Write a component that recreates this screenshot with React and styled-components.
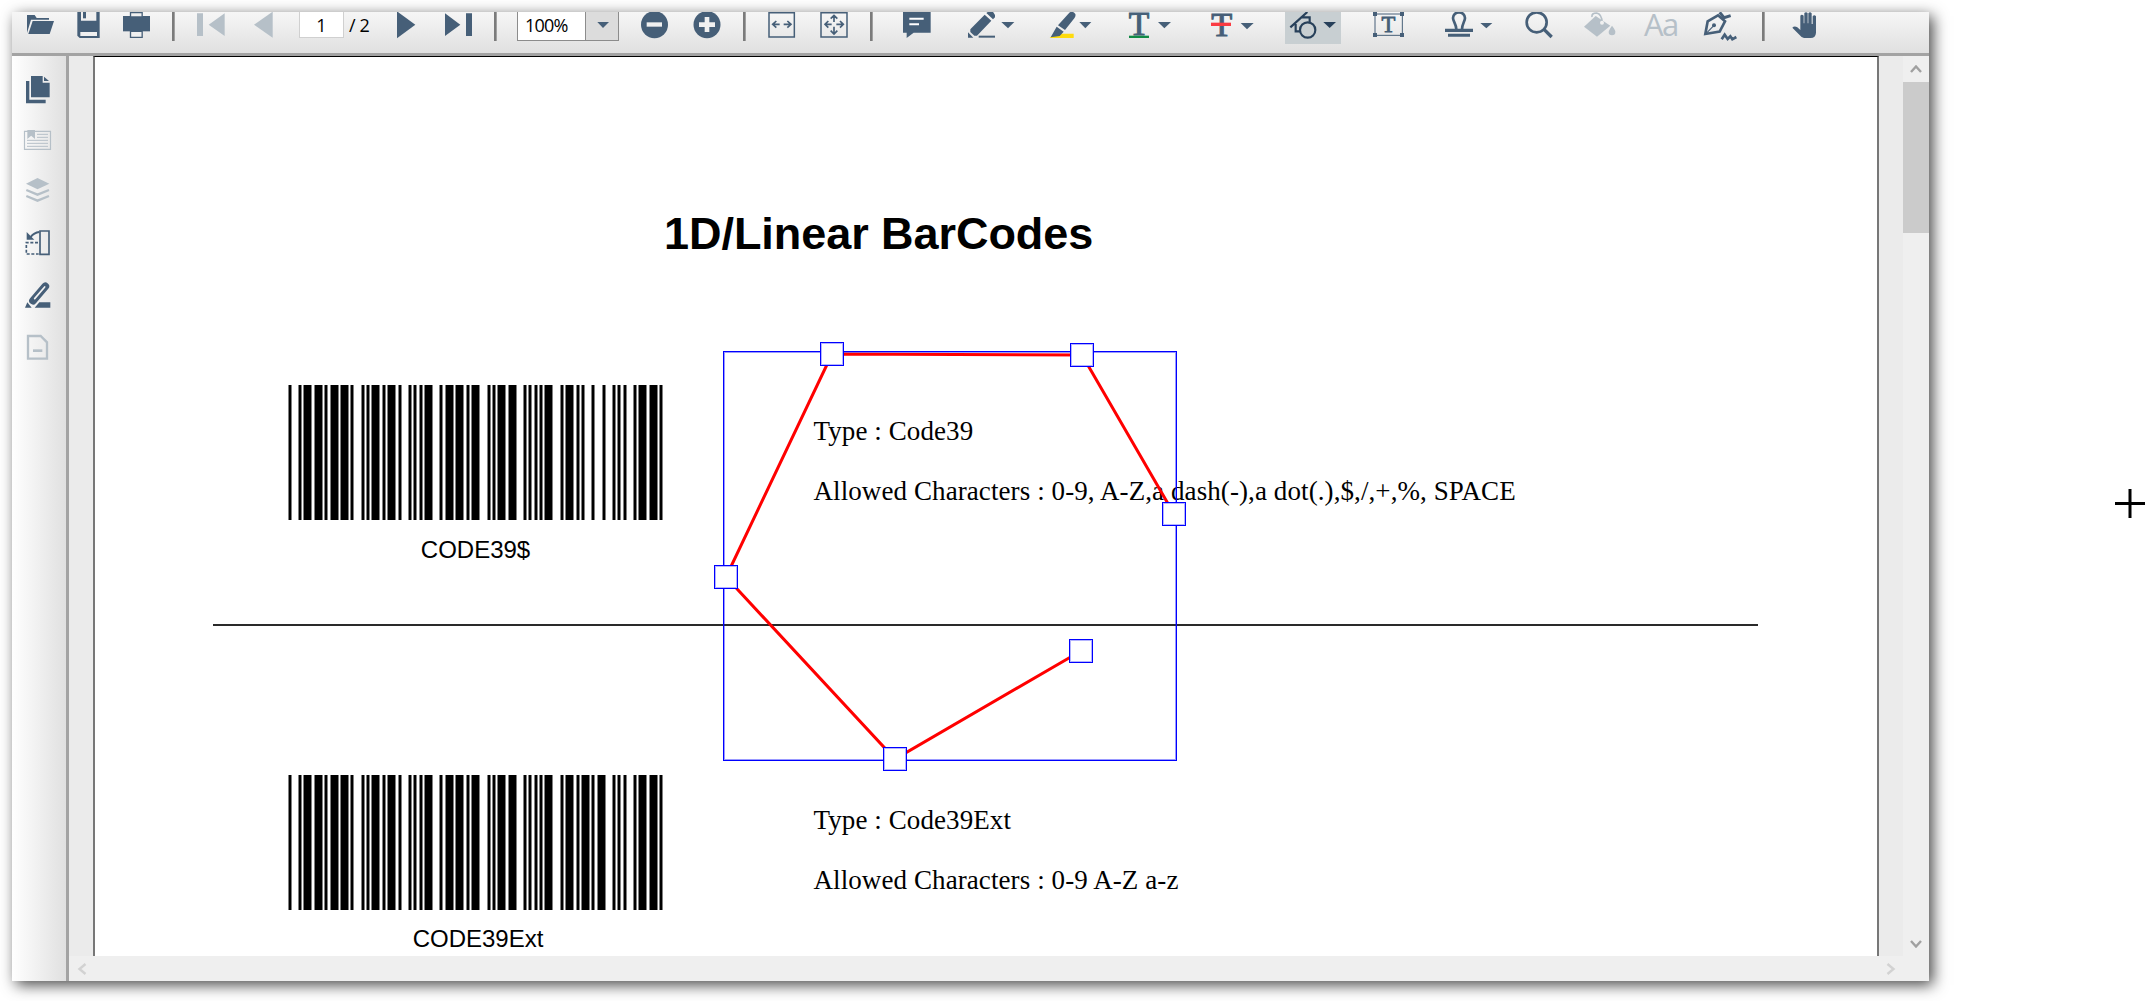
import React from 'react';
import styled, { createGlobalStyle, css } from 'styled-components';

const INK = '#465f78';
const FADED = '#b6c0c8';

const GlobalStyle = createGlobalStyle`
  * { box-sizing: border-box; }
  body { margin: 0; background: #fff; overflow: hidden; }
`;

const Desktop = styled.main`
  position: relative;
  width: 2154px;
  height: 1001px;
  padding: 12px;
  overflow: hidden;
  background: #fff;
`;

const Window = styled.div`
  display: flex;
  flex-direction: column;
  width: 1917px;
  height: 969px;
  background: #ebebeb;
  box-shadow: 4px 4px 14px rgba(0, 0, 0, 0.72);
`;

const Toolbar = styled.header`
  display: flex;
  align-items: flex-start;
  height: 44px;
  padding-left: 14px;
  background: linear-gradient(#f6f6f6, #e0e0e0);
  border-bottom: 3px solid #a3a3a3;
`;

const Glyph = styled.svg`
  display: block;
  flex: none;
  color: ${(p) => (p.$faded ? FADED : INK)};
  fill: currentColor;
  overflow: ${(p) => (p.$open ? 'visible' : 'hidden')};
`;

const Tool = styled.button`
  display: flex;
  flex: none;
  margin: 0 0 0 ${(p) => p.$gap}px;
  padding: 0;
  border: 0;
  background: none;
  ${(p) =>
    p.$pressed &&
    css`
      height: 32px;
      overflow: hidden;
      background: #c8cfd2;
      ${Glyph} { color: #27405a; }
    `}
`;

const Divider = styled.span`
  flex: none;
  width: 3px;
  height: 29px;
  margin-left: ${(p) => p.$gap}px;
  background: #7b7b7b;
  border-right: 1px solid #a0a0a0;
`;

const uiText = css`
  font-family: 'Open Sans', 'Noto Sans', sans-serif;
  font-size: 18px;
  line-height: 27px;
  color: #000;
`;

const PageBox = styled.span`
  ${uiText}
  flex: none;
  width: 45px;
  height: 26px;
  margin-left: 25px;
  text-align: center;
  background: #fff;
  border: 1px solid #d0d0d0;
  border-top: 0;
`;

const PageTotal = styled.span`
  ${uiText}
  flex: none;
  width: 22px;
  margin-left: 5px;
  white-space: nowrap;
  letter-spacing: -0.4px;
`;

const ZoomBox = styled.div`
  ${uiText}
  display: flex;
  flex: none;
  width: 102px;
  height: 29px;
  margin-left: 20px;
  background: #fff;
  border: 1px solid #8c8c8c;
  border-top: 0;
`;

const ZoomValue = styled.span`
  flex: 1;
  padding-left: 7px;
  letter-spacing: -0.8px;
`;

const ZoomArrow = styled.span`
  display: flex;
  justify-content: center;
  width: 33px;
  padding: 10px 0 0 2px;
  background: #dcdcdc;
  border-left: 1px solid #8c8c8c;
`;

const FontTool = styled.button`
  flex: none;
  width: 36px;
  margin: 0 0 0 27px;
  padding: 0;
  border: 0;
  background: none;
  color: ${FADED};
  font: 31px/25px 'Open Sans', 'Noto Sans', sans-serif;
  letter-spacing: -1.5px;
  text-align: left;
`;

const Body = styled.div`
  display: flex;
  flex: 1;
  min-height: 0;
`;

const Sidebar = styled.nav`
  display: flex;
  flex-direction: column;
  align-items: flex-start;
  width: 57px;
  padding: 19px 0 0 11px;
  background: linear-gradient(90deg, #fff, #e0e0e0);
  border-right: 3px solid #a3a3a3;
`;

const SideTool = styled.button`
  display: block;
  margin: 0 0 ${(p) => p.$after}px;
  padding: 0;
  border: 0;
  background: none;
`;

const Viewer = styled.section`
  display: flex;
  flex-direction: column;
  flex: 1;
  min-width: 0;
`;

const Viewport = styled.div`
  display: flex;
  height: 900px;
`;

const Canvas = styled.div`
  display: flex;
  flex: 1;
  justify-content: center;
  background: #ebebeb;
  overflow: hidden;
`;

const Page = styled.article`
  position: relative;
  width: 1786px;
  height: 900px;
  overflow: hidden;
  background: #fff;
  border: solid #777;
  border-width: 1px 2px 0;
  border-top-color: #000;
`;

const Heading = styled.h1`
  margin: 152px 0 126px 569px;
  font: bold 45px/50px 'Liberation Sans', Arial, sans-serif;
  letter-spacing: -0.05px;
  white-space: nowrap;
`;

const Entry = styled.section`
  display: flex;
  gap: 150px;
  height: 179px;
  padding-left: 193px;
`;

const Figure = styled.figure`
  width: 375px;
  margin: 0;
`;

const Caption = styled.figcaption`
  margin-top: ${(p) => (p.$wide ? 15 : 16)}px;
  padding-left: ${(p) => (p.$wide ? 5 : 0)}px;
  text-align: center;
  font: 24px/28px 'Liberation Sans', Arial, sans-serif;
`;

const Info = styled.div`
  display: flex;
  flex-direction: column;
  gap: 30px;
  padding: ${(p) => p.$top}px 0 0 0.5px;
  white-space: nowrap;
  font: 27px/30px 'Liberation Serif', 'Times New Roman', serif;
  letter-spacing: 0.09px;
`;

const Rule = styled.hr`
  width: 1545px;
  height: 2px;
  margin: 60px 0 149px 118px;
  border: 0;
  background: #2a2a2a;
`;

const Annotation = styled.svg`
  position: absolute;
  left: 0;
  top: 0;
`;

const VScroll = styled.div`
  display: flex;
  flex-direction: column;
  align-items: center;
  width: 26px;
  padding: 9px 0 8px;
  background: #efefef;
`;

const Thumb = styled.div`
  width: 26px;
  height: 151px;
  margin: 9px 0 auto;
  background: #cbcbcb;
`;

const HScroll = styled.div`
  display: flex;
  align-items: center;
  justify-content: space-between;
  height: 25px;
  padding: 1px 33px 0 8px;
  background: #efefef;
`;

const Crosshair = styled.svg`
  position: absolute;
  left: 2115px;
  top: 489px;
`;

/* Toolbar art is drawn on a grid of three units to the pixel. */
function Icon({ x, y = 36, w, h = 41, faded, open, children }) {
  return (
    <Glyph width={w} height={h} viewBox={`${x} ${y} ${w * 3} ${h * 3}`} $faded={faded} $open={open}>
      {children}
    </Glyph>
  );
}

function Stroke({ d, w = 5, ...rest }) {
  return <path d={d} fill="none" stroke="currentColor" strokeWidth={w} {...rest} />;
}

function Letter({ x, y, size, w = 2.5 }) {
  return (
    <text
      x={x}
      y={y}
      fontSize={size}
      textAnchor="middle"
      fontFamily="'Liberation Serif', serif"
      stroke="currentColor"
      strokeWidth={w}
    >
      T
    </text>
  );
}

const PAPER = '#f0f0f0';

const CODE39 = {
  '*': 'nwnnwnwnn',
  C: 'wnwnnwnnn',
  O: 'wnnnwnnwn',
  D: 'nnnnwwnnw',
  E: 'wnnnwwnnn',
  3: 'wnwwnnnnn',
  9: 'nnwwnnwnn',
  $: 'nwnwnwnnn',
};

function Barcode({ value }) {
  const bars = [];
  let at = 0;
  for (const ch of `*${value}*`) {
    [...CODE39[ch]].forEach((size, i) => {
      if (i % 2 === 0) {
        bars.push({ x: Math.floor(0.15 + at * 2.6175), w: size === 'w' ? 9 : 4 });
      }
      at += size === 'w' ? 3 : 1;
    });
    at += 1;
  }
  return (
    <svg width="375" height="135" display="block" shapeRendering="crispEdges">
      {bars.map((b) => (
        <g key={b.x}>
          <rect x={b.x} width={b.w} height="135" fill="#808080" />
          <rect x={b.x + 1} width={b.w - 2} height="135" />
        </g>
      ))}
    </svg>
  );
}

function Code({ value, caption, wide, children }) {
  return (
    <Entry>
      <Figure>
        <Barcode value={value} />
        <Caption $wide={wide}>{caption}</Caption>
      </Figure>
      <Info $top={wide ? 30 : 31}>{children}</Info>
    </Entry>
  );
}

const VERTICES = [
  [737, 297],
  [987, 298],
  [1079, 457],
  [631, 520],
  [800, 702],
  [986, 594],
];

function Polyline() {
  return (
    <Annotation width="1782" height="899">
      <polyline
        points="1079,457 987,298 737,297 631,520 800,702 986,594"
        fill="none"
        stroke="#f00"
        strokeWidth="3"
      />
      <rect x="629.5" y="295.5" width="451" height="407" fill="none" stroke="#00f" strokeOpacity="0.4" />
      <rect x="628.5" y="294.5" width="453" height="409" fill="none" stroke="#00f" />
      {VERTICES.map(([x, y]) => (
        <g key={`${x}-${y}`}>
          <rect x={x - 11.5} y={y - 11.5} width="23" height="23" fill="#fff" stroke="#00f" />
          <rect x={x - 10.5} y={y - 10.5} width="21" height="21" fill="none" stroke="#b4b4ff" />
        </g>
      ))}
    </Annotation>
  );
}

function Chevron({ d, w, h, color }) {
  return (
    <svg width={w} height={h}>
      <path d={d} fill="none" stroke={color} strokeWidth="2.4" />
    </svg>
  );
}

function MainToolbar() {
  return (
    <Toolbar>
      <Tool $gap={0}>
        <Icon x={78} w={30}>
          <path d="M81 45H104L110 54H147V59H93L81 99Z" />
          <path d="M98 63H162L149 102H85Z" />
        </Icon>
      </Tool>
      <Tool $gap={20}>
        <Icon x={228} w={25}>
          <path d="M232 30H299V114H239L232 107Z" />
          <path d="M243 30H289V62H243ZM241 96H291V108H241Z" fill={PAPER} />
          <path d="M249 30H258V55H249Z" />
        </Icon>
      </Tool>
      <Tool $gap={21}>
        <Icon x={366} w={29}>
          <path d="M369 48H450V94H369Z" />
          <path d="M391.500 38H426.500V51H391.500ZM391.500 94H426.500V112H391.500Z" fill={PAPER} stroke="currentColor" strokeWidth="4" />
        </Icon>
      </Tool>
      <Divider $gap={21} />
      <Tool $gap={21}>
        <Icon x={588} w={30} faded>
          <path d="M591 40H609V108H591ZM674 40V108L626 74Z" />
        </Icon>
      </Tool>
      <Tool $gap={27}>
        <Icon x={759} w={21} faded>
          <path d="M818 35V113L762 74Z" />
        </Icon>
      </Tool>
      <PageBox>1</PageBox>
      <PageTotal>/ 2</PageTotal>
      <Tool $gap={25}>
        <Icon x={1188} w={21}>
          <path d="M1191 34V115L1246 74Z" />
        </Icon>
      </Tool>
      <Tool $gap={27}>
        <Icon x={1332} w={30}>
          <path d="M1335 40V108L1381 74ZM1398 40H1416V108H1398Z" />
        </Icon>
      </Tool>
      <Divider $gap={20} />
      <ZoomBox>
        <ZoomValue>100%</ZoomValue>
        <ZoomArrow>
          <Icon x={324} y={66} w={12} h={7}>
            <path d="M325 66H360L342 84Z" />
          </Icon>
        </ZoomArrow>
      </ZoomBox>
      <Tool $gap={21}>
        <Icon x={450} w={29}>
          <circle cx="493.500" cy="74" r="40.500" />
          <path d="M470 67H516V80H470Z" fill={PAPER} />
        </Icon>
      </Tool>
      <Tool $gap={24}>
        <Icon x={609} w={29}>
          <circle cx="651" cy="74" r="40.500" />
          <path d="M627 67H644V51H658V67H675V81H658V96H644V81H627Z" fill={PAPER} />
        </Icon>
      </Tool>
      <Divider $gap={21} />
      <Tool $gap={22}>
        <Icon x={834} w={28}>
          <Stroke d="M837 38H913V111H837Z" w={4.5} />
          <Stroke d="M848 73H869M859 63L848 73L859 83M881 73H903M892 63L903 73L892 83" />
        </Icon>
      </Tool>
      <Tool $gap={24}>
        <Icon x={990} w={29}>
          <Stroke d="M993 38H1071V111H993Z" w={4.5} />
          <Stroke d="M1005 73H1025M1015 63L1005 73L1015 83M1039 73H1060M1050 63L1060 73L1050 83M1032 46V66M1022 56L1032 46L1042 56M1032 80V102M1022 92L1032 102L1042 92" />
        </Icon>
      </Tool>
      <Divider $gap={21} />
      <Tool $gap={29}>
        <Icon x={1236} w={30}>
          <path d="M1239 32H1322V98H1271L1250 114V98H1239Z" />
          <path d="M1258 53H1301V59H1258ZM1258 70H1287V76H1258Z" fill="#fff" />
        </Icon>
      </Tool>
      <Tool $gap={35}>
        <Icon x={21} w={50}>
          <path d="M31 88L74 44L94 62L51 107L43 107L31 96ZM79 39L86 34H98L105 45V52L99 58ZM24 97L40 113H24Z" />
          <Stroke d="M56 110H105" w={6} />
          <path d="M124 66H163L144 85Z" />
        </Icon>
      </Tool>
      <Tool $gap={32}>
        <Icon x={267} w={44}>
          <path d="M269 114L284 101H341V114Z" fill="#ffdb0d" />
          <path d="M328 38Q338 31 346 42Q348 48 343 55L315 90L294 76ZM290 80L311 95L299 108L272 112Z" />
          <path d="M358 66H394L376 85Z" />
        </Icon>
      </Tool>
      <Tool $gap={35}>
        <Icon x={504} w={45} open>
          <Letter x={537} y={104} size={101} w={3} />
          <path d="M507 107H567V114H507Z" fill="#108a45" />
          <path d="M594 66H633L613 85Z" />
        </Icon>
      </Tool>
      <Tool $gap={37}>
        <Icon x={750} w={46} open>
          <Letter x={785} y={109} size={103} w={3} />
          <path d="M753 68H813V78H753Z" fill="#fb3b42" />
          <path d="M842 69H881L861 88Z" />
        </Icon>
      </Tool>
      <Tool $gap={29} $pressed>
        <Icon x={975} w={56}>
          <Stroke d="M991 82L1042 36M1022 52H1049V66M1007 72V94H1020" w={6.5} />
          <circle cx="1043" cy="90" r="23" fill="none" stroke="currentColor" strokeWidth="6.500" />
          <path d="M1090 66H1128L1109 84Z" />
        </Icon>
      </Tool>
      <Tool $gap={31}>
        <Icon x={1236} w={33} open>
          <Stroke d="M1245 42H1327V106H1245Z" w={3} />
          <path d="M1239 36H1251V48H1239ZM1320 36H1332V48H1320ZM1239 99H1251V111H1239ZM1320 99H1332V111H1320Z" />
          <Letter x={1285} y={95} size={68} w={2.5} />
        </Icon>
      </Tool>
      <Tool $gap={39}>
        <Icon x={102} w={50}>
          <Stroke d="M139 88C139 72 129 64 129 54A18 17 0 0 1 165 54C165 64 156 72 156 88" w={8} />
          <path d="M105 86H189V96H105ZM114 101H180V110H114ZM211 69H247L229 85Z" />
        </Icon>
      </Tool>
      <Tool $gap={30}>
        <Icon x={342} w={30}>
          <circle cx="380" cy="67" r="30" fill="none" stroke="currentColor" strokeWidth="8" />
          <Stroke d="M402 88L425 111" w={10} />
        </Icon>
      </Tool>
      <Tool $gap={29}>
        <Icon x={519} w={34} faded>
          <path d="M522 80L557 48L601 77L561 110Z" />
          <Stroke d="M546 51Q544 39 560 39Q576 42 576 68" w={5} />
          <circle cx="576" cy="68" r="6" fill={PAPER} />
          <path d="M606 77Q617 91 616 96A10 10 0 0 1 596 96Q596 91 606 77Z" />
        </Icon>
      </Tool>
      <FontTool>Aa</FontTool>
      <Tool $gap={23}>
        <Icon x={879} w={36}>
          <Stroke d="M886 102L893 64L924 46L945 64L929 95Z" w={8} />
          <Stroke d="M888 101L912 76" w={3.5} />
          <circle cx="912" cy="76" r="6" />
          <Stroke d="M929 37L942 53L962 47" w={9} />
          <Stroke d="M935 118L944 104L953 117L961 109L967 118L979 111" w={8} />
        </Icon>
      </Tool>
      <Divider $gap={23} />
      <Tool $gap={26}>
        <Icon x={1143} w={27}>
          <path d="M1147 83Q1153 77 1162 82L1171 90V47Q1175 41 1181 47V70H1183V39Q1188 34 1193 39V70H1195V40Q1200 34 1205 40V72H1208V49Q1213 43 1218 49V98Q1217 114 1202 114H1182Q1174 112 1168 104Z" />
        </Icon>
      </Tool>
    </Toolbar>
  );
}

function SideRail() {
  return (
    <Sidebar>
      <SideTool $after={20}>
        <Icon x={69} y={75} w={29} h={30}>
          <path d="M78 93H88V149H137V160H78ZM93 78H128V98H149V142H93ZM132 80L147 93H132Z" />
        </Icon>
      </SideTool>
      <SideTool $after={20}>
        <Icon x={69} y={225} w={29} h={30} faded>
          <Stroke d="M73.500 244H151.500V298H73.500Z" w={3.5} />
          <path d="M82 240H105V267L93.500 257L82 267Z" />
          <Stroke d="M111 253H144M111 262H144M81 271H144M81 280H144M81 289H144" w={3} />
        </Icon>
      </SideTool>
      <SideTool $after={23}>
        <Icon x={69} y={375} w={29} h={30} faded>
          <path d="M112.500 384L148 401L112.500 418L78 401Z" />
          <Stroke d="M79 420L112.500 434L147 420M79 438L112.500 452L147 438" w={7} />
        </Icon>
      </SideTool>
      <SideTool $after={22}>
        <Icon x={69} y={534} w={29} h={30}>
          <Stroke d="M120 543H147V613H120Z" w={5} />
          <Stroke d="M114 578H79V612H116" strokeDasharray="9 5" />
          <Stroke d="M118 546Q102 548 92 561" w={6} />
          <path d="M80 546L103 569H80Z" />
        </Icon>
      </SideTool>
      <SideTool $after={22}>
        <Icon x={69} y={690} w={29} h={30}>
          <Stroke d="M136 709L99 752" w={23} strokeLinecap="round" />
          <path d="M134 711L104 746" fill="none" stroke="#f2f2f2" strokeWidth="5" strokeLinecap="round" />
          <path d="M75 773L82 757L95 773ZM118 757H151V773H104Z" />
        </Icon>
      </SideTool>
      <SideTool $after={0}>
        <Icon x={69} y={846} w={29} h={30} faded>
          <Stroke d="M84 858H122L141 877V926H84Z" w={7} />
          <Stroke d="M99 902H127" w={8} />
        </Icon>
      </SideTool>
    </Sidebar>
  );
}

export default function App() {
  return (
    <Desktop>
      <GlobalStyle />
      <Window>
        <MainToolbar />
        <Body>
          <SideRail />
          <Viewer>
            <Viewport>
              <Canvas>
                <Page>
                  <Heading>1D/Linear BarCodes</Heading>
                  <Code value="CODE39$" caption="CODE39$">
                    <span>Type : Code39</span>
                    <span>Allowed Characters : 0-9, A-Z,a dash(-),a dot(.),$,/,+,%, SPACE</span>
                  </Code>
                  <Rule />
                  <Code value="CODE39E" caption="CODE39Ext" wide>
                    <span>Type : Code39Ext</span>
                    <span>Allowed Characters : 0-9 A-Z a-z</span>
                  </Code>
                  <Polyline />
                </Page>
              </Canvas>
              <VScroll>
                <Chevron w={12} h={8} d="M1 7L6 1.500L11 7" color="#a0a0a0" />
                <Thumb />
                <Chevron w={12} h={8} d="M1 1L6 6.500L11 1" color="#a0a0a0" />
              </VScroll>
            </Viewport>
            <HScroll>
              <Chevron w={10} h={12} d="M8.500 1L2.500 6L8.500 11" color="#d2d2d2" />
              <Chevron w={10} h={12} d="M1.500 1L7.500 6L1.500 11" color="#d2d2d2" />
            </HScroll>
          </Viewer>
        </Body>
      </Window>
      <Crosshair width="30" height="29">
        <path d="M0 14.500H30M15 0V29" stroke="#000" strokeWidth="3" />
      </Crosshair>
    </Desktop>
  );
}
